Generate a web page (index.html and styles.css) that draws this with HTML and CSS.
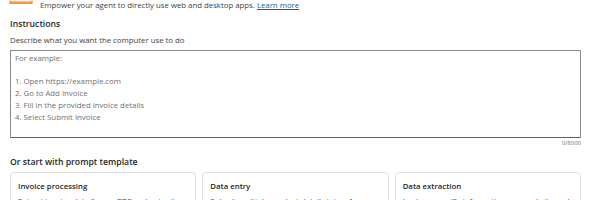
FILE: index.html
```html
<!DOCTYPE html>
<html lang="en">
<head>
<meta charset="utf-8">
<title>Computer use</title>
<link rel="stylesheet" href="styles.css">
</head>
<body>
<div class="page">
  <header class="header">
    <svg class="tool-icon" width="24" height="24" viewBox="0 0 24 24" aria-hidden="true">
      <rect x="0.5" y="0.5" width="23" height="21" rx="3" fill="#fdf0e2" stroke="#f4b26b"/>
      <rect x="0" y="20.5" width="24" height="2.4" rx="1.2" fill="#f2993e"/>
    </svg>
    <div class="header-desc">Empower your agent to directly use web and desktop apps. <a href="#" class="link">Learn more</a></div>
  </header>

  <section class="instructions">
    <div class="label">Instructions</div>
    <div class="hint">Describe what you want the computer use to do</div>
    <div class="textbox" role="textbox" aria-multiline="true">
      <div class="placeholder">For example:<br><br>1. Open https://example.com<br>2. Go to Add Invoice<br>3. Fill in the provided invoice details<br>4. Select Submit Invoice</div>
    </div>
    <div class="counter">0/8000</div>
  </section>

  <section class="templates">
    <div class="label">Or start with prompt template</div>
    <div class="cards">
      <div class="card">
        <div class="card-title">Invoice processing</div>
        <div class="card-desc">Extract invoice data from a PDF and enter it into your accounting system.</div>
      </div>
      <div class="card">
        <div class="card-title">Data entry</div>
        <div class="card-desc">Submit multiple product details into a form on a website.</div>
      </div>
      <div class="card">
        <div class="card-title">Data extraction</div>
        <div class="card-desc">Look up specific information on a website and summarize it.</div>
      </div>
    </div>
  </section>
</div>
</body>
</html>
```

FILE: styles.css
```css
* { box-sizing: border-box; }

html, body {
  margin: 0;
  padding: 0;
  background: #ffffff;
  overflow: hidden;
}

body {
  font-family: "Open Sans", "Noto Sans", "Liberation Sans", sans-serif;
  color: #242424;
  font-size: 7.8px;
}

.page {
  padding: 0 9px 0 10px;
}

.header {
  display: flex;
  align-items: flex-start;
  gap: 7px;
  height: 10px;
}

.tool-icon {
  flex: none;
  display: block;
  margin-left: -1px;
  margin-top: -19px;
}

.header-desc {
  color: #424242;
  line-height: 10px;
}

.link {
  color: #115ea3;
  text-decoration: underline;
}

.instructions {
  margin-top: 7px;
}

.label {
  font-size: 8.7px;
  font-weight: 600;
  line-height: 14px;
  color: #1f1f1f;
}

.hint {
  margin-top: 3px;
  line-height: 12px;
  color: #424242;
}

.textbox {
  margin-top: 4px;
  height: 88px;
  border: 1px solid #8a8a8a;
  border-bottom-color: #616161;
  border-radius: 1px;
  padding: 2px 4px;
  background: #fff;
}

.placeholder {
  color: #707070;
  line-height: 11.7px;
}

.counter {
  text-align: right;
  font-size: 6px;
  line-height: 8px;
  margin-top: 1px;
  color: #707070;
}

.templates {
  margin-top: 8px;
}

.cards {
  margin-top: 3px;
  display: grid;
  grid-template-columns: repeat(3, 1fr);
  gap: 6px;
}

.card {
  border: 1px solid #e0e0e0;
  border-radius: 4px;
  padding: 7px 7px;
  height: 64px;
  overflow: hidden;
  background: #fff;
}

.card-title {
  font-size: 7.8px;
  font-weight: 600;
  line-height: 12px;
  color: #1f1f1f;
}

.card-desc {
  margin-top: 4px;
  line-height: 11px;
  color: #424242;
}
```
